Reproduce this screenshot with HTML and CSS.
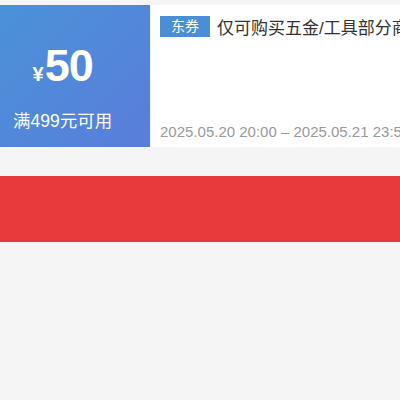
FILE: index.html
```html
<!DOCTYPE html>
<html lang="zh-CN">
<head>
    <meta charset="UTF-8">
    <meta name="viewport" content="width=device-width, initial-scale=1.0">
    <title>东券</title>
    <link rel="stylesheet" href="styles.css">
</head>
<body>
    <div class="coupon">
        <div class="coupon-left">
            <div class="price-box">
                <div class="price"><span class="yen">¥</span>50</div>
                <div class="limit">满499元可用</div>
            </div>
        </div>
        <div class="coupon-right">
            <div class="title-row">
                <span class="tag">东券</span>
                <span class="title">仅可购买五金/工具部分商品</span>
            </div>
            <div class="date">2025.05.20 20:00 – 2025.05.21 23:59</div>
        </div>
    </div>

    <div class="red-bar"></div>
</body>
</html>
```

FILE: styles.css
```css
* { margin: 0; padding: 0; box-sizing: border-box; font-family: "Liberation Sans", "Noto Sans CJK SC", sans-serif; }
body { background: #f5f5f5; width: 400px; overflow: hidden; }

.coupon {
    display: flex;
    height: 142px;
    margin-top: 5px;
    background: #fff;
}

.coupon-left {
    width: 150px;
    flex-shrink: 0;
    padding: 37px 0 0 13px;
    color: #fff;
    background: linear-gradient(135deg, #4a92d8 0%, #5a7ddb 100%);
}

.price-box {
    display: inline-flex;
    flex-direction: column;
    align-items: center;
}

.price {
    font-size: 45px;
    font-weight: bold;
    line-height: 48px;
    letter-spacing: -1px;
}

.yen { font-size: 20px; margin-right: 2px; }

.limit {
    font-size: 17.5px;
    line-height: 24px;
    margin-top: 11px;
}

.coupon-right {
    flex: 1;
    min-width: 0;
    display: flex;
    flex-direction: column;
    justify-content: space-between;
    padding: 9px 0 7px 9px;
    white-space: nowrap;
    overflow: hidden;
    border-left: 1px solid #eef5fc;
}

.title-row {
    display: flex;
    align-items: center;
}

.tag {
    background: #4a8ed6;
    color: #fff;
    font-size: 14px;
    line-height: 21px;
    padding: 0 11px;
    margin-right: 7px;
}

.title {
    font-size: 17px;
    color: #333;
}

.date {
    font-size: 15px;
    color: #999;
}

.red-bar {
    height: 66px;
    margin-top: 29px;
    background: #e8393d;
}
```
